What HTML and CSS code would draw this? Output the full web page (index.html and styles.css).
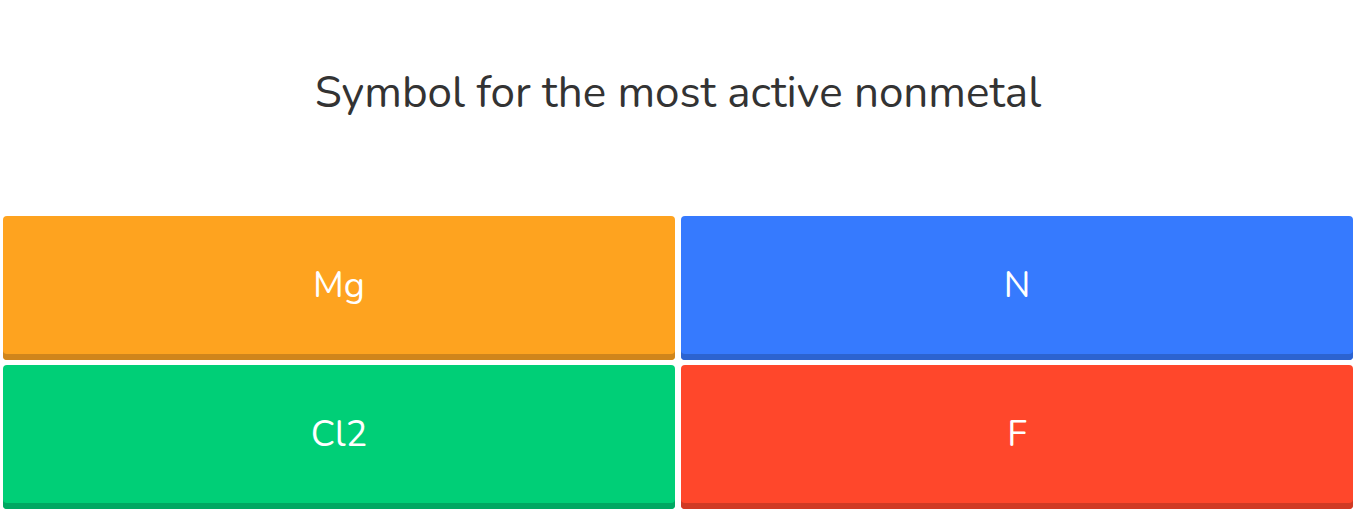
FILE: index.html
```html
<!DOCTYPE html>
<html lang="en">
<head>
  <meta charset="UTF-8">
  <meta name="viewport" content="width=device-width, initial-scale=1.0">
  <title>Quiz</title>
  <link rel="stylesheet" href="styles.css">
</head>
<body>
  <div class="quiz">
    <div class="question">
      <h1>Symbol for the most active nonmetal</h1>
    </div>
    <div class="options">
      <button class="option orange">Mg</button>
      <button class="option blue">N</button>
      <button class="option green">Cl2</button>
      <button class="option red">F</button>
    </div>
  </div>
</body>
</html>
```

FILE: styles.css
```css
body { font-family: "Nunito", "Noto Sans", Lato, sans-serif; background: #fff; margin: 0; padding: 0; }
.quiz { padding: 0 7px 0 3px; }
.question { height: 216px; display: flex; align-items: center; justify-content: center; padding-bottom: 30px; box-sizing: border-box; }
.question h1 { margin: 0; font-size: 44px; font-weight: 400; color: #333; }
.options { display: grid; grid-template-columns: 1fr 1fr; column-gap: 6px; row-gap: 5px; }
.option { height: 144px; border: none; border-radius: 4px; color: #fff; font-family: inherit; font-size: 36px; padding: 0 0 6px; cursor: pointer; }
.orange { background: #fea31f; box-shadow: inset 0 -6px 0 #d0851b; }
.blue { background: #367afe; box-shadow: inset 0 -6px 0 #2c63d0; }
.green { background: #00cf77; box-shadow: inset 0 -6px 0 #00a862; }
.red { background: #ff472b; box-shadow: inset 0 -6px 0 #d03a24; }
```
